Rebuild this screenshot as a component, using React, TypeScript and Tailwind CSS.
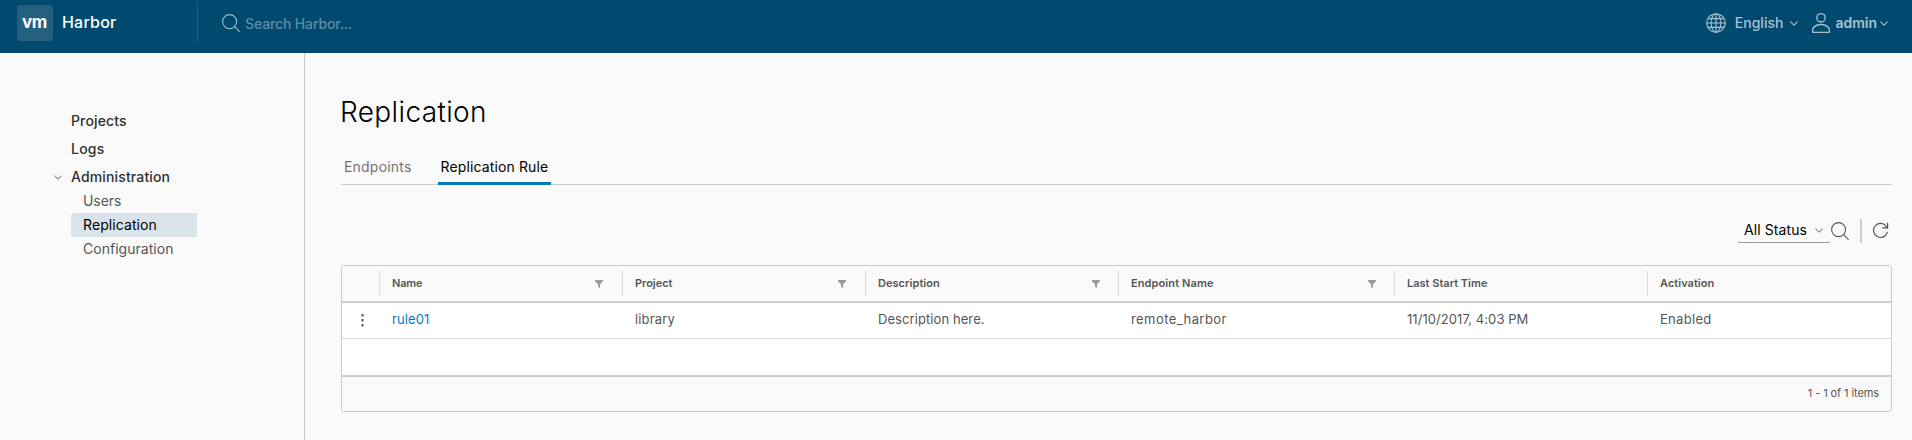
import type { ReactNode } from "react";

function Chevron({ className, w = 8 }: { className?: string; w?: number }) {
  return (
    <svg className={className} width={w} height={w / 2 + 1} viewBox="0 0 8 5" fill="none" stroke="currentColor" strokeWidth="1.1" strokeLinecap="round" strokeLinejoin="round">
      <path d="M0.7 0.8 4 4.1 7.3 0.8" />
    </svg>
  );
}

function SearchIcon({ className }: { className?: string }) {
  return (
    <svg className={className} width="18" height="18" viewBox="0 0 18 18" fill="none" stroke="currentColor" strokeWidth="1.1" strokeLinecap="round">
      <circle cx="7.6" cy="7.6" r="7" />
      <path d="M12.9 12.9 17.3 17.3" />
    </svg>
  );
}

function GlobeIcon({ className }: { className?: string }) {
  return (
    <svg className={className} width="20" height="20" viewBox="0 0 20 20" fill="none" stroke="currentColor" strokeWidth="1.1">
      <circle cx="10" cy="10" r="9.3" />
      <ellipse cx="10" cy="10" rx="4.9" ry="9.3" />
      <path d="M10 .7V19.300M.7 10H19.300M2 5.600H18M2 14.400H18" />
    </svg>
  );
}

function UserIcon({ className }: { className?: string }) {
  return (
    <svg className={className} width="18" height="20" viewBox="0 0 18 20" fill="none" stroke="currentColor" strokeWidth="1.3" strokeLinejoin="round">
      <circle cx="9" cy="4.800" r="4.200" />
      <path d="M.7 19.300V15.600C2.600 13 5.500 11.500 9 11.500S15.400 13 17.300 15.600V19.300Z" />
    </svg>
  );
}

function RefreshIcon({ className }: { className?: string }) {
  return (
    <svg className={className} width="16" height="17" viewBox="0 0 16 17" fill="none" stroke="currentColor" strokeWidth="1.2" strokeLinecap="round" strokeLinejoin="round">
      <path d="M14.300 10.300A7 7 0 1 1 13.400 4.600L14.400 5.800" />
      <path d="M14.600 1V5.900H9.800" />
    </svg>
  );
}

function FilterIcon() {
  return (
    <svg className="shrink-0 text-[#9a9a9a]" width="8" height="8" viewBox="0 0 8 8" fill="currentColor">
      <path d="M0 0H8V1.200L5 4.300V8L3 6.900V4.300L0 1.200Z" />
    </svg>
  );
}

const columns = [
  { label: "Name", track: "tracking-[-0.15px]", filter: "pr-[19px]" },
  { label: "Project", track: "tracking-[-0.03px]", filter: "pr-[19px]" },
  { label: "Description", track: "tracking-[0.04px]", filter: "pr-[18px]" },
  { label: "Endpoint Name", track: "tracking-[0.11px]", filter: "pr-[18px]" },
  { label: "Last Start Time", track: "", filter: null },
  { label: "Activation", track: "tracking-[0.04px]", filter: null },
];

const grid = "grid grid-cols-[37px_243px_243px_253px_276px_253px_1fr]";

function Cell({ children, className = "" }: { children: ReactNode; className?: string }) {
  return <div className={`pl-[13px] leading-[33px] ${className}`}>{children}</div>;
}

export default function App() {
  return (
    <div className="flex h-[440px] w-[1912px] flex-col overflow-hidden bg-[#fafafa] font-[Inter,sans-serif] text-sm text-[#565656]">
      <header className="flex h-[53px] shrink-0 items-start bg-[#004a70]">
        <div className="mt-[5px] ml-[17px] flex h-9 w-9 justify-center rounded-[3px] bg-[#25617f] pr-px text-[17px] leading-[35px] font-bold tracking-[-0.4px] text-white">
          vm
        </div>
        <span className="mt-[10px] ml-[9px] w-[135px] text-base leading-6 font-medium tracking-[0.2px] text-white">Harbor</span>
        <div className="mt-[3px] h-10 w-px bg-[#1f5f80]" />
        <SearchIcon className="mt-[14px] ml-6 text-[#a3bdcb]" />
        <span className="mt-3 ml-[5px] leading-6 font-medium tracking-[-0.13px] text-[#5f8ca5]">Search Harbor...</span>
        <div className="mr-[24px] ml-auto flex text-[#a9c1ce]">
          <GlobeIcon className="mt-[13px]" />
          <span className="mt-[11px] ml-[9px] leading-6 font-medium">English</span>
          <Chevron className="mt-[21px] ml-[7px]" />
          <UserIcon className="mt-[13px] ml-[14px]" />
          <span className="mt-[11px] ml-[5px] leading-6 font-semibold">admin</span>
          <Chevron className="mt-[21px] ml-[3px]" />
        </div>
      </header>

      <div className="flex min-h-0 flex-1">
        <nav className="flex w-[305px] shrink-0 flex-col border-r border-[#ccc] pt-14 pl-[54px] leading-6">
          <a className="pl-[17px] font-medium tracking-[0.13px] text-[#313131]">Projects</a>
          <a className="mt-1 pl-[17px] font-medium tracking-[0.25px] text-[#313131]">Logs</a>
          <a className="mt-1 flex items-center font-medium tracking-[0.14px] text-[#313131]">
            <Chevron className="mr-[9px] text-[#8c8c8c]" />
            Administration
          </a>
          <div className="ml-[17px] flex w-[126px] flex-col">
            <a className="pl-3 tracking-[-0.06px]">Users</a>
            <a className="rounded-l-[3px] bg-[#d9e4ea] pl-3 tracking-[0.08px] text-black">Replication</a>
            <a className="pl-3 tracking-[0.03px]">Configuration</a>
          </div>
        </nav>

        <main className="flex w-[1587px] flex-col pl-9">
          <h1 className="mt-[39px] -ml-px text-[28px] leading-10 font-light tracking-[0.37px] text-black">Replication</h1>
          <div className="mt-[23px] flex h-[30px] border-b border-[#ccc] leading-6">
            <span className="ml-[3px] tracking-[0.2px] text-[#737373]">Endpoints</span>
            <span className="ml-[26px] h-[30px] w-[113px] border-b-[3px] border-[#007cbb] pl-[3px] tracking-[0.13px] text-black">Replication Rule</span>
          </div>

          <div className="mt-8 flex justify-end pr-[3px]">
            <div className="mt-px flex h-[25px] w-[92px] border-b border-[#9a9a9a] pl-[6px] leading-6 tracking-[0.09px] text-black">
              All Status
              <Chevron className="mt-[10px] ml-2 text-[#8c8c8c]" />
            </div>
            <SearchIcon className="mt-[5px] ml-px text-[#565656]" />
            <div className="mt-[2px] ml-[11px] h-6 w-[2px] bg-[#ccc]" />
            <RefreshIcon className="mt-[5px] ml-[11px] text-[#565656]" />
          </div>

          <div className="mt-[22px] flex h-[147px] flex-col overflow-hidden rounded-[3px] border border-[#ccc] bg-white text-[13px]">
            <div className={`${grid} h-[37px] shrink-0 border-b-2 border-[#ccc] bg-[#fafafa] text-[11px] font-semibold`}>
              <div />
              {columns.map((c) => (
                <div key={c.label} className="mt-[5px] flex h-[25px] justify-between border-l border-[#ddd] pl-3 leading-[25px]">
                  <span className={c.track}>{c.label}</span>
                  {c.filter && (
                    <span className={`pt-[9px] ${c.filter}`}>
                      <FilterIcon />
                    </span>
                  )}
                </div>
              ))}
            </div>
            <div className={`${grid} h-9 shrink-0 border-b border-[#ddd]`}>
              <div className="flex justify-center pt-[11px] pl-[3px]">
                <svg width="3" height="13" viewBox="0 0 3 13" fill="#565656">
                  <rect x=".5" y="0" width="2" height="2.500" />
                  <rect x=".5" y="5" width="2" height="2.500" />
                  <rect x=".5" y="10" width="2" height="2.500" />
                </svg>
              </div>
              <Cell className="tracking-[0.1px] text-[#007cbb]">rule01</Cell>
              <Cell className="tracking-[0.16px]">library</Cell>
              <Cell className="tracking-[0.08px]">Description here.</Cell>
              <Cell className="tracking-[0.43px]">remote_harbor</Cell>
              <Cell className="tracking-[0.07px]">11/10/2017, 4:03 PM</Cell>
              <Cell className="tracking-[0.3px]">Enabled</Cell>
            </div>
            <div className="h-9 shrink-0" />
            <div className="flex-1 border-t-2 border-[#ccc] bg-[#fafafa] pr-3 text-right text-[11px] leading-[33px] tracking-[-0.09px]">
              1 - 1 of 1 items
            </div>
          </div>
        </main>
      </div>
    </div>
  );
}
